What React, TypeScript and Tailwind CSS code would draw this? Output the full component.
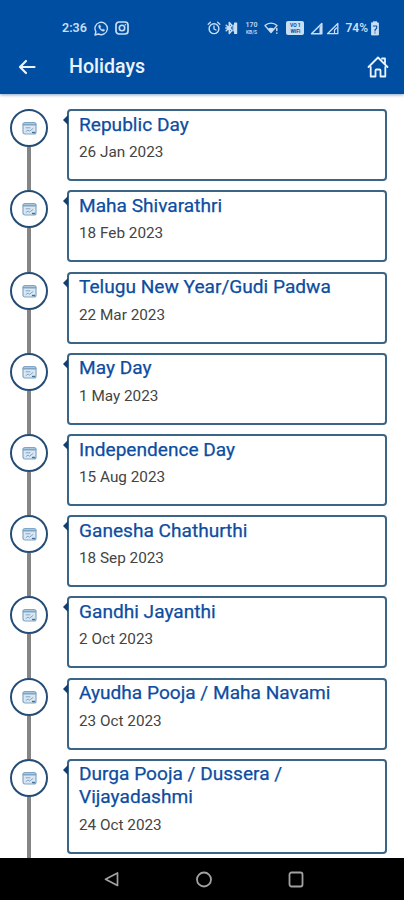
import type { ReactNode } from 'react'

type Holiday = {
  title: string
  date: string
}

const holidays: Holiday[] = [
  { title: 'Republic Day', date: '26 Jan 2023' },
  { title: 'Maha Shivarathri', date: '18 Feb 2023' },
  { title: 'Telugu New Year/Gudi Padwa', date: '22 Mar 2023' },
  { title: 'May Day', date: '1 May 2023' },
  { title: 'Independence Day', date: '15 Aug 2023' },
  { title: 'Ganesha Chathurthi', date: '18 Sep 2023' },
  { title: 'Gandhi Jayanthi', date: '2 Oct 2023' },
  { title: 'Ayudha Pooja / Maha Navami', date: '23 Oct 2023' },
  { title: 'Durga Pooja / Dussera / Vijayadashmi', date: '24 Oct 2023' },
]

function Icon({ className, viewBox, children }: { className: string; viewBox: string; children: ReactNode }) {
  return (
    <svg
      className={`shrink-0 ${className}`}
      viewBox={viewBox}
      fill="none"
      stroke="currentColor"
      strokeLinecap="round"
      strokeLinejoin="round"
    >
      {children}
    </svg>
  )
}

function StatusBar() {
  return (
    <div className="flex h-14 items-center pl-[62px] pr-6 text-[#c9def5]">
      <span className="w-[25px] text-[12.5px] font-semibold leading-none">2:36</span>

      {/* WhatsApp */}
      <Icon className="ml-[7px] h-[15px] w-[15px]" viewBox="0 0 15 15">
        <path d="M1 14l.9-3.3A6.2 6.2 0 1 1 4.4 13z" strokeWidth="1.4" />
        <path d="M5 4.2c-.9.9-.4 2.6 1.1 4.2s3.3 2.2 4.3 1.4l.2-1-1.6-.8-.8.7c-1-.5-1.6-1.1-2-2l.6-.8-.7-1.7z" fill="currentColor" strokeWidth=".4" />
      </Icon>

      {/* Instagram */}
      <Icon className="ml-[6px] h-[14px] w-[14px]" viewBox="0 0 14 14">
        <rect x="1" y="1" width="12" height="12" rx="3" strokeWidth="1.7" />
        <circle cx="7" cy="7" r="2.7" strokeWidth="1.6" />
        <circle cx="10.4" cy="3.7" r=".8" fill="currentColor" stroke="none" />
      </Icon>

      {/* Alarm */}
      <Icon className="ml-[78px] h-[14px] w-[14px]" viewBox="0 0 14 14">
        <circle cx="7" cy="7.7" r="4.9" strokeWidth="1.4" />
        <path d="M1.2 3.2l2.2-2M12.8 3.2l-2.2-2M7 5v3l2 1" strokeWidth="1.3" />
      </Icon>

      {/* Bluetooth */}
      <Icon className="ml-[4px] h-[14px] w-[13px]" viewBox="0 0 13 14">
        <path d="M1.2 4.2L7 9.5 4.3 12.5V1.5L7 4.5 1.2 9.8M.8 7h5" strokeWidth="1.5" />
        <rect x="9" y="1.5" width="3.2" height="11.5" rx=".5" fill="currentColor" stroke="none" />
        <path d="M8.2 4v6" strokeWidth="1.2" />
      </Icon>

      {/* Network speed */}
      <div className="ml-[7px] flex w-[14px] flex-col items-center font-bold opacity-90">
        <span className="text-[7px] leading-[8px]">170</span>
        <span className="text-[5px] leading-[6px]">KB/S</span>
      </div>

      {/* Wi-Fi */}
      <Icon className="ml-[6px] h-[14px] w-[15px]" viewBox="0 0 15 14">
        <path d="M1 4.6C4.4 1.3 9.6 1.3 13 4.6L7 11.5z" strokeWidth="1.4" />
        <path d="M4 7.6c2-1.3 4-1.3 6 0l-3 3.6z" fill="currentColor" stroke="none" />
        <path d="M12.8 7.5v2M12.8 12v.3" strokeWidth="1.5" />
      </Icon>

      {/* VoWiFi badge */}
      <div className="ml-[7px] flex h-[14px] w-[19px] flex-col items-center justify-center rounded-[2px] bg-[#c9def5] font-bold text-[#004ea2]">
        <span className="text-[5px] leading-[6px]">VO 1</span>
        <span className="text-[5px] leading-[6px]">WiFi</span>
      </div>

      {/* Mobile signal */}
      <Icon className="ml-[6px] h-[13px] w-[13px]" viewBox="0 0 13 13">
        <path d="M1.5 11.7L11.8 1.5v10.2z" strokeWidth="1.5" />
        <path d="M9.5 5v6h2V3z" fill="currentColor" stroke="none" />
      </Icon>
      <Icon className="ml-[3px] h-[13px] w-[13px]" viewBox="0 0 13 13">
        <path d="M1.5 11.7L11.8 1.5v10.2z" strokeWidth="1.3" />
        <path d="M8.5 11V8l2-2" strokeWidth="1.2" />
      </Icon>

      <span className="ml-[6px] w-[23px] text-[12px] font-semibold leading-none">74%</span>

      {/* Battery */}
      <Icon className="ml-[2px] h-[15px] w-[10px]" viewBox="0 0 10 15">
        <path d="M3 2V.8h4V2h1.5v12h-7V2z" fill="currentColor" strokeWidth=".8" />
        <path d="M3.3 5h3.4v2.2L5 9v1M5 11.8v.1" stroke="#004ea2" strokeWidth="1.1" />
      </Icon>
    </div>
  )
}

function AppBar() {
  return (
    <div className="flex h-[38px] items-center pb-[16px] pl-[18px] pr-[14px] text-[#eaf3ff]">
      <Icon className="h-[18px] w-[18px]" viewBox="0 0 18 18">
        <path d="M16.5 9H2.5M8 3L2 9l6 6" strokeWidth="2.2" />
      </Icon>
      <h1 className="ml-[33px] text-[19.6px] font-medium leading-6">Holidays</h1>
      <Icon className="ml-auto h-6 w-6" viewBox="0 0 24 24">
        <path d="M4.7 12v9.5h4.8v-6a1 1 0 0 1 1-1h3a1 1 0 0 1 1 1v6h4.800V12" strokeWidth="1.8" />
        <path d="M2.5 12L12 2.5l9.5 9.5M16 3.5h3v5" strokeWidth="1.8" />
      </Icon>
    </div>
  )
}

function CalendarIcon() {
  return (
    <Icon className="h-[14px] w-[15px] text-[#7fa6c4]" viewBox="0 0 15 14">
      <rect x="1" y="1.5" width="13" height="11.5" rx="2" fill="#dbe8f3" strokeWidth="1.2" />
      <path d="M1.5 3.5h12" strokeWidth="2" />
      <path d="M4 6.8h4M4 10.5l2-1.5 1.5 1.2L11 7.5" strokeWidth="1" />
      <path d="M10.5 11.5h2" stroke="#466f96" strokeWidth="1.3" />
    </Icon>
  )
}

function HolidayItem({ holiday }: { holiday: Holiday }) {
  return (
    <li className="flex">
      {/* Timeline marker */}
      <div className="flex w-[38px] shrink-0 flex-col items-center">
        <div className="flex h-[38px] w-[38px] shrink-0 items-center justify-center rounded-full border-2 border-[#234c76] bg-white">
          <CalendarIcon />
        </div>
        <div className="w-1 grow bg-[#858585]" />
      </div>

      <div className="relative mb-[9.2px] ml-[19px] min-h-[72px] w-[320px] rounded border-2 border-[#3b6586] pb-[18px] pl-[10px] pr-8 pt-[1.5px]">
        <div className="absolute -left-[6px] top-[4px] h-0 w-0 border-y-[5px] border-r-[5px] border-y-transparent border-r-[#123f73]" />
        <h2 className="text-[19.1px] leading-[23px] text-[#0d4da1] [-webkit-text-stroke:0.25px_#0d4da1]">{holiday.title}</h2>
        <p className="mt-[7.5px] text-[15.3px] leading-[18px] text-[#444]">{holiday.date}</p>
      </div>
    </li>
  )
}

function NavigationBar() {
  return (
    <nav className="flex h-[42px] shrink-0 items-center justify-between bg-black pl-[103px] pr-[99px] text-[#a2a2a2]">
      <Icon className="h-[18px] w-[17px]" viewBox="0 0 17 18">
        <path d="M14.5 3v12.5L2.5 9.2z" strokeWidth="1.7" />
      </Icon>
      <Icon className="h-[18px] w-[18px]" viewBox="0 0 18 18">
        <circle cx="9" cy="9.5" r="7" strokeWidth="1.8" />
      </Icon>
      <Icon className="h-[18px] w-[18px]" viewBox="0 0 18 18">
        <rect x="2.5" y="2.5" width="13" height="14" rx="2" strokeWidth="1.8" />
      </Icon>
    </nav>
  )
}

export default function App() {
  return (
    <div className="flex h-[900px] w-[404px] flex-col overflow-hidden bg-white font-['Roboto',sans-serif]">
      <header className="z-10 h-[94px] shrink-0 bg-[#004ea2] shadow-[0_1px_3px_rgba(0,50,130,0.45)]">
        <StatusBar />
        <AppBar />
      </header>
      <main className="h-[764px] shrink-0 overflow-hidden pl-[10px] pt-[15.3px]">
        <ul>
          {holidays.map((holiday) => (
            <HolidayItem key={holiday.title} holiday={holiday} />
          ))}
        </ul>
      </main>
      <NavigationBar />
    </div>
  )
}
